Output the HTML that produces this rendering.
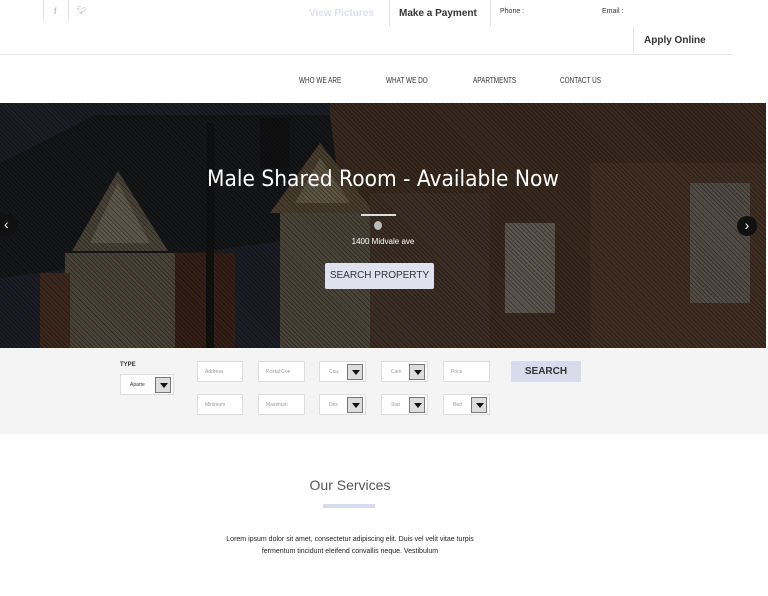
<!DOCTYPE html>
<html><head><meta charset="utf-8"><style>
*{margin:0;padding:0;box-sizing:border-box}
body{width:768px;height:596px;background:#fff;font-family:"Liberation Sans",sans-serif;position:relative;overflow:hidden}
.a{position:absolute}
.inp{position:absolute;height:21px;border:1px solid #ddd;background:#fff;font-size:5px;color:#999;padding:7px 0 0 7px}
.sel{position:absolute;height:21px;width:47px;border:1px solid #ddd;background:#fff;font-size:5px;color:#999;padding:7px 0 0 9px}
.sel i{position:absolute;right:2px;top:2px;width:16px;height:16px;background:#ddd;border:1px solid #777}
.sel i:after{content:"";position:absolute;left:4px;top:5px;border-left:4px solid transparent;border-right:4px solid transparent;border-top:5px solid #111}
.nav{font-size:8px;color:#333;top:76px;transform:scaleX(.8);transform-origin:left}
</style></head><body>
<div class="a" style="left:43px;top:0;width:1px;height:22px;background:#e5e5e5"></div>
<div class="a" style="left:68px;top:0;width:1px;height:22px;background:#e5e5e5"></div>
<div class="a" style="left:54px;top:6px;font-size:9px;color:#aaa">f</div>
<div class="a" style="left:77px;top:6px;font-size:8px;color:#aaa">&#x1F426;&#xFE0E;</div>
<div class="a" style="left:309px;top:8px;font-size:10px;font-weight:bold;color:#dde0ee">View Pictures</div>
<div class="a" style="left:389px;top:0;width:1px;height:27px;background:#e5e5e5"></div>
<div class="a" style="left:399px;top:8px;font-size:10px;font-weight:bold;color:#333">Make a Payment</div>
<div class="a" style="left:490px;top:0;width:1px;height:27px;background:#e5e5e5"></div>
<div class="a" style="left:500px;top:8px;font-size:7px;color:#333">Phone :</div>
<div class="a" style="left:602px;top:8px;font-size:7px;color:#333">Email :</div>
<div class="a" style="left:633px;top:27px;width:1px;height:27px;background:#e5e5e5"></div>
<div class="a" style="left:644px;top:35px;font-size:10px;font-weight:bold;color:#333">Apply Online</div>
<div class="a" style="left:0;top:54px;width:733px;height:1px;background:#e5e5e5"></div>
<div class="a nav" style="left:299px">WHO WE ARE</div>
<div class="a nav" style="left:386px">WHAT WE DO</div>
<div class="a nav" style="left:473px">APARTMENTS</div>
<div class="a nav" style="left:560px">CONTACT US</div>
<div class="a" style="left:0;top:103px;width:766px;height:245px;overflow:hidden;background:#222">
<svg width="766" height="245" style="position:absolute;left:0;top:0">
<rect width="766" height="245" fill="#262830"/>
<polygon points="330,0 766,0 766,245 330,245" fill="#4a3628"/>
<polygon points="0,60 95,12 330,12 345,130 0,175" fill="#1c1d20"/>
<polygon points="118,68 72,148 168,148" fill="#5e5646"/>
<polygon points="118,80 90,140 150,140" fill="#7a7262"/>
<rect x="65" y="150" width="110" height="95" fill="#5e5848"/>
<rect x="40" y="170" width="30" height="75" fill="#4e3426"/>
<rect x="175" y="150" width="60" height="95" fill="#43291e"/>
<polygon points="320,40 270,110 375,110" fill="#5e503c"/>
<polygon points="320,55 295,100 350,100" fill="#7a6e58"/>
<rect x="280" y="110" width="90" height="135" fill="#5f594a"/>
<rect x="370" y="90" width="120" height="155" fill="#4f3d30"/>
<rect x="505" y="120" width="50" height="90" fill="#767066"/>
<rect x="590" y="60" width="176" height="185" fill="#543c2e"/>
<rect x="690" y="80" width="60" height="120" fill="#6a645a"/>
<rect x="206" y="20" width="8" height="225" fill="#161616"/>
<rect x="260" y="15" width="30" height="50" fill="#161616"/>
</svg>
<div class="a" style="inset:0;background:repeating-linear-gradient(45deg,rgba(0,0,0,.5) 0 1px,rgba(0,0,0,.22) 1px 3px)"></div>
<div class="a" style="left:0;width:766px;text-align:center;top:64px;font-size:22px;color:#fff;font-family:'DejaVu Sans',sans-serif;transform:scaleX(.92)">Male Shared Room - Available Now</div>
<div class="a" style="left:361px;top:111px;width:35px;height:2px;background:#ddd"></div>
<div class="a" style="left:374px;top:118px;width:8px;height:9px;border-radius:50%;background:#bbb"></div>
<div class="a" style="left:0;width:766px;text-align:center;top:134px;font-size:8px;color:#fff">1400 Midvale ave</div>
<div class="a" style="left:325px;top:160px;width:109px;height:26px;background:#dfe1ef;border-radius:2px;font-size:10px;color:#333;text-align:center;line-height:26px">SEARCH PROPERTY</div>
<div class="a" style="left:0;top:111px;width:18px;height:22px;background:#111;border-radius:0 11px 11px 0;color:#fff;font-size:14px;padding-left:4px;line-height:20px">&#8249;</div>
<div class="a" style="left:737px;top:113px;width:20px;height:20px;background:#111;border-radius:50%;color:#fff;font-size:14px;text-align:center;line-height:18px">&#8250;</div>
</div>
<div class="a" style="left:0;top:348px;width:768px;height:86px;background:#f4f4f4"></div>
<div class="a" style="left:120px;top:362px;font-size:6px;color:#333;font-weight:bold">TYPE</div>
<div class="sel" style="left:120px;top:374px;width:54px;color:#333">Aparte<i></i></div>
<div class="inp" style="left:197px;top:361px;width:46px">Address</div>
<div class="inp" style="left:258px;top:361px;width:47px">Postal Coe</div>
<div class="sel" style="left:319px;top:361px">Cou<i></i></div>
<div class="sel" style="left:381px;top:361px">Cam<i></i></div>
<div class="inp" style="left:443px;top:361px;width:47px">Price</div>
<div class="a" style="left:511px;top:361px;width:70px;height:21px;background:#d8dbeb;font-size:10px;font-weight:bold;color:#333;text-align:center;line-height:21px">SEARCH</div>
<div class="inp" style="left:197px;top:394px;width:46px">Minimum</div>
<div class="inp" style="left:258px;top:394px;width:47px">Maximum</div>
<div class="sel" style="left:319px;top:394px">Des<i></i></div>
<div class="sel" style="left:381px;top:394px">Stat<i></i></div>
<div class="sel" style="left:443px;top:394px">Bed<i></i></div>
<div class="a" style="left:0;width:700px;top:477px;text-align:center;font-size:14px;color:#555">Our Services</div>
<div class="a" style="left:323px;top:504px;width:52px;height:4px;background:#d8dbeb"></div>
<div class="a" style="left:210px;width:280px;top:534px;text-align:center;font-size:7px;line-height:12px;color:#222">Lorem ipsum dolor sit amet, consectetur adipiscing elit. Duis vel velit vitae turpis fermentum tincidunt eleifend convallis neque. Vestibulum</div>
</body></html>
